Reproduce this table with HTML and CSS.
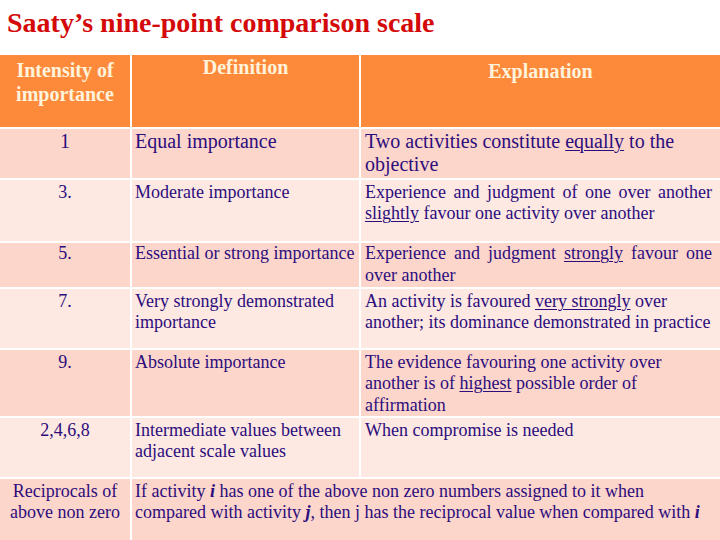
FILE: index.html
```html
<!DOCTYPE html>
<html>
<head>
<meta charset="utf-8">
<link rel="stylesheet" href="styles.css">
</head>
<body>
<h1 class="title">Saaty’s nine-point comparison scale</h1>
<div class="scale">
  <div class="hd hd-int">Intensity of<br>importance</div>
  <div class="hd hd-def">Definition</div>
  <div class="hd hd-exp">Explanation</div>

  <div class="c pink num big">1</div>
  <div class="c pink def big">Equal importance</div>
  <div class="c pink exp big nw">Two activities constitute <u>equally</u> to the<br>objective</div>

  <div class="c light num">3.</div>
  <div class="c light def">Moderate importance</div>
  <div class="c light exp"><span class="jl">Experience and judgment of one over another</span><u>slightly</u> favour one activity over another</div>

  <div class="c pink num r5">5.</div>
  <div class="c pink def nw r5">Essential or strong importance</div>
  <div class="c pink exp r5"><span class="jl">Experience and judgment <u>strongly</u> favour one</span>over another</div>

  <div class="c light num">7.</div>
  <div class="c light def nw">Very strongly demonstrated<br>importance</div>
  <div class="c light exp nw">An activity is favoured <u>very strongly</u> over<br>another; its dominance demonstrated in practice</div>

  <div class="c pink num">9.</div>
  <div class="c pink def">Absolute importance</div>
  <div class="c pink exp nw">The evidence favouring one activity over<br>another is of <u>highest</u> possible order of<br>affirmation</div>

  <div class="c light num">2,4,6,8</div>
  <div class="c light def nw">Intermediate values between<br>adjacent scale values</div>
  <div class="c light exp">When compromise is needed</div>

  <div class="c pink num nw">Reciprocals of<br>above non zero</div>
  <div class="c pink def span nw">If activity <span class="v">i</span> has one of the above non zero numbers assigned to it when<br>compared with activity <span class="v">j</span>, then j has the reciprocal value when compared with <span class="v">i</span></div>
</div>
</body>
</html>
```
FILE: styles.css
```css
html, body {
  margin: 0;
  padding: 0;
  background: #ffffff;
}

body, .title, .scale, .hd, .c {
  font-family: "Liberation Serif", "Times New Roman", serif;
}

.title {
  margin: 0;
  height: 55px;
  box-sizing: border-box;
  padding: 7px 0 0 7px;
  font-size: 28px;
  line-height: 32px;
  font-weight: bold;
  color: #d40a0a;
}

.scale {
  display: grid;
  grid-template-columns: 130px 227px 1fr;
  grid-template-rows: 72px 49px 61px 44px 59px 66px 59px 61px;
  gap: 2px;
  background: #ffffff;
  width: 720px;
}

.hd {
  background: #fd8a3b;
  color: #fff3dc;
  font-weight: bold;
  font-size: 20px;
  line-height: 24px;
  text-align: center;
}

.hd-int {
  padding-top: 3px;
}

.hd-def {
  padding-top: 0;
}

.hd-exp {
  padding-top: 4px;
}

.c {
  color: #2c0d7c;
  font-size: 18px;
  line-height: 21.5px;
}

.pink {
  background: #fcd5cb;
}

.light {
  background: #fde8e2;
}

.num {
  text-align: center;
  padding-top: 1.5px;
}

.def {
  padding: 1.5px 0 0 3px;
}

.exp {
  padding: 1.5px 8px 0 4px;
}

.r5 {
  padding-top: 0;
}

.big {
  font-size: 20px;
  line-height: 23px;
  padding-top: 1px;
}

.jl {
  display: block;
  text-align: justify;
  text-align-last: justify;
}

.nw {
  white-space: nowrap;
}

.span {
  grid-column: 2 / 4;
}

.v {
  font-weight: bold;
  font-style: italic;
}

u {
  text-decoration-thickness: 1px;
  text-underline-offset: 2px;
}
```
